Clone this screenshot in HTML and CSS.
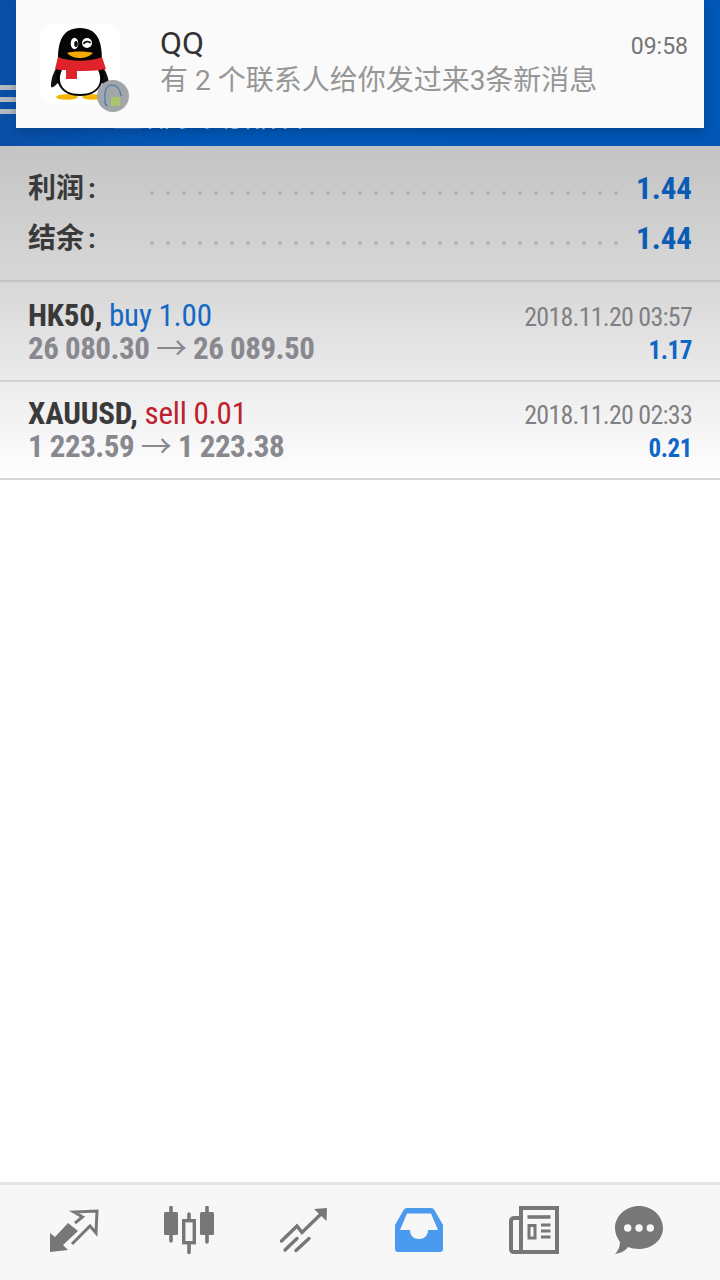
FILE: index.html
```html
<!DOCTYPE html>
<html lang="zh">
<head>
  <meta charset="UTF-8" />
  <meta name="viewport" content="width=device-width, initial-scale=1.0"/>
  <title>History</title>
  <link rel="stylesheet" href="styles.css">
</head>
<body>
  <header class="topbar">
    <div class="menu"><span></span><span></span><span></span></div>
    <div class="title">全部交易品种</div>
  </header>

  <div class="notice">
    <div class="notice-icon">
      <svg class="penguin" viewBox="0 0 80 80" width="80" height="80">
        <rect width="80" height="80" rx="14" fill="#fff"/>
        <ellipse cx="27" cy="73" rx="11" ry="2.800" fill="#f4b400"/>
        <ellipse cx="53" cy="73" rx="11" ry="2.800" fill="#f4b400"/>
        <path d="M18 42 C13 48 11 56 11 62 C11 65 14 63 18 59 Z M62 42 C67 48 69 56 69 62 C69 65 66 63 62 59 Z" fill="#111"/>
        <path d="M18 36 C18 18 22 4 40 4 C58 4 62 18 62 36 C66 50 65 72 40 72 C15 72 14 50 18 36 Z" fill="#050505"/>
        <path d="M22 46 C17 56 20 70 40 70 C60 70 63 56 58 46 Z" fill="#fff"/>
        <path d="M18 33 C30 38 50 38 62 33 L66 45 C56 47 46 47 37 47 L37 55 L26 55 L26 46 C22 46 18 46 15 45 Z" fill="#e0222b"/>
        <ellipse cx="34.500" cy="19.500" rx="3.800" ry="5.700" fill="#fff"/>
        <ellipse cx="47" cy="19" rx="5" ry="5" fill="#fff"/>
        <ellipse cx="36" cy="20" rx="1.800" ry="3" fill="#111"/>
        <path d="M43.500 20 C45 17 49 17 50.500 19" fill="none" stroke="#111" stroke-width="1.800"/>
        <path d="M27 29 C32 27 47 27 53 29 C49 33 44 34 40 34 C35 34 31 33 27 29 Z" fill="#f4a800"/>
      </svg>
      <svg class="badge" viewBox="0 0 32 32" width="32" height="32">
        <circle cx="16" cy="16" r="16" fill="#a3a6a8"/>
        <path d="M10 26 C7 24 8 21 8 19 C7 12 9 5 15 5 C20 5 23 8 24 16" fill="none" stroke="#3f78b8" stroke-width="1.200"/>
        <rect x="14" y="17" width="9" height="9" fill="#a9c46c"/>
      </svg>
    </div>
    <div class="notice-text">
      <div class="notice-head">
        <span class="notice-app">QQ</span>
        <span class="notice-time">09:58</span>
      </div>
      <div class="notice-msg">有 2 个联系人给你发过来3条新消息</div>
    </div>
  </div>

  <main class="panel">
    <section class="summary">
      <div class="sum-row">
        <span class="sum-label">利润<i>:</i></span>
        <span class="dots"></span>
        <span class="sum-value">1.44</span>
      </div>
      <div class="sum-row">
        <span class="sum-label">结余<i>:</i></span>
        <span class="dots"></span>
        <span class="sum-value">1.44</span>
      </div>
    </section>

    <section class="deal">
      <div class="deal-left">
        <div class="deal-name"><b>HK50,</b> <span class="buy">buy 1.00</span></div>
        <div class="deal-price">26 080.30 <span class="arrow">→</span> 26 089.50</div>
      </div>
      <div class="deal-right">
        <div class="deal-date">2018.11.20 03:57</div>
        <div class="deal-profit">1.17</div>
      </div>
    </section>

    <section class="deal">
      <div class="deal-left">
        <div class="deal-name"><b>XAUUSD,</b> <span class="sell">sell 0.01</span></div>
        <div class="deal-price">1 223.59 <span class="arrow">→</span> 1 223.38</div>
      </div>
      <div class="deal-right">
        <div class="deal-date">2018.11.20 02:33</div>
        <div class="deal-profit">0.21</div>
      </div>
    </section>
  </main>

  <nav class="tabs">
    <svg class="tab" viewBox="0 0 50 50" width="50" height="50">
      <path d="M1 46 L1 27 L6 31 L19 17 L29 25 L14 39 L19 44 Z" fill="#777"/>
      <path d="M26 17 L33.500 11 L25 6 L48 5 L47 27 L41 20 L23 38" fill="none" stroke="#777" stroke-width="3"/>
    </svg>
    <svg class="tab" viewBox="0 0 50 50" width="50" height="50">
      <path d="M7 1.500 V35 M43 1.500 V36 M25 8 V46.500" fill="none" stroke="#777" stroke-width="3.600" stroke-linecap="round"/>
      <rect x="0" y="6" width="14" height="23" rx="1.500" fill="#777"/>
      <rect x="36" y="6" width="14" height="23" rx="1.500" fill="#777"/>
      <rect x="19.700" y="14.700" width="10.600" height="22" fill="#f7f7f7" stroke="#777" stroke-width="3.400"/>
    </svg>
    <svg class="tab" viewBox="0 0 50 50" width="50" height="50">
      <path d="M2.500 35 L18 20 L23 26.500 L44 6" fill="none" stroke="#777" stroke-width="3.400" stroke-linecap="round"/>
      <path d="M35 3 L48 2 L47.500 15 Z" fill="#777"/>
      <path d="M6 44 L18 32.500 M17 44.500 L30 32.500" fill="none" stroke="#777" stroke-width="3.400" stroke-linecap="round"/>
    </svg>
    <svg class="tab" viewBox="0 0 50 50" width="50" height="50">
      <path d="M13 2 H37 C39 2 40 3 41 5 L49 19 V43 C49 45 48 46 46 46 H4 C2 46 1 45 1 43 V19 L9 5 C10 3 11 2 13 2 Z" fill="#4a9bf0"/>
      <path d="M13 7.500 H37 L44 24 H34 C34 30 30 33 25 33 C20 33 16 30 16 24 H6 Z" fill="#f7f7f7"/>
    </svg>
    <svg class="tab" viewBox="0 0 50 50" width="50" height="50">
      <path d="M10 12 H6 C3 12 2 13 2 15 V43 C2 45 3 46 5 46 H48 V2 H12 V44" fill="none" stroke="#777" stroke-width="4"/>
      <path d="M18.500 11 H41.500" stroke="#777" stroke-width="3.600"/>
      <rect x="20" y="19.500" width="6" height="12.500" fill="none" stroke="#777" stroke-width="3"/>
      <path d="M32 19 H41.500 M32 25 H41.500 M32 31 H41.500" stroke="#777" stroke-width="3"/>
    </svg>
    <svg class="tab" viewBox="0 0 50 50" width="50" height="50">
      <path d="M25 0 C38 0 49 10 49 22 C49 34 38 43 25 43 C21 43 17 42 14 41 C11 45 7 47 1 48 C4 45 6 41 6 36 C3 32 1 27 1 22 C1 10 12 0 25 0 Z" fill="#777"/>
      <circle cx="13.700" cy="22" r="3.700" fill="#f7f7f7"/>
      <circle cx="25" cy="22" r="3.700" fill="#f7f7f7"/>
      <circle cx="36.300" cy="22" r="3.700" fill="#f7f7f7"/>
    </svg>
  </nav>
</body>
</html>
```

FILE: styles.css
```css
* {
  box-sizing: border-box;
  margin: 0;
  padding: 0;
}

body {
  width: 720px;
  height: 1280px;
  overflow: hidden;
  position: relative;
  display: flex;
  flex-direction: column;
  background: #fff;
  font-family: "Roboto Condensed", "Liberation Sans Narrow", Roboto, "Noto Sans CJK SC", sans-serif;
}

.topbar {
  height: 146px;
  flex: none;
  display: flex;
  align-items: flex-end;
  gap: 80px;
  padding-bottom: 17px;
  background: linear-gradient(to right, #0a4fa8, #0059b8 30%, #0057b5);
}

.menu {
  width: 32px;
  margin-bottom: 15px;
  display: flex;
  flex-direction: column;
  gap: 7px;
}

.menu span {
  height: 5px;
  background: #b4b8c0;
}

.title {
  color: #b8cde6;
  font-family: "Noto Sans CJK SC", sans-serif;
  font-size: 33px;
  line-height: 34px;
}

.notice {
  position: absolute;
  left: 16px;
  top: 0;
  width: 688px;
  height: 128px;
  display: flex;
  padding: 24px 16px 0 24px;
  gap: 40px;
  background: #fafafa;
  box-shadow: 0 4px 10px rgba(0, 40, 90, 0.35);
}

.notice-icon {
  position: relative;
  width: 80px;
  height: 80px;
  flex: none;
}

.penguin {
  display: block;
}

.badge {
  position: absolute;
  left: 57px;
  top: 56px;
}

.notice-text {
  flex: 1;
}

.notice-head {
  display: flex;
  justify-content: space-between;
  align-items: baseline;
}

.notice-app {
  font-family: Roboto, sans-serif;
  font-size: 32px;
  line-height: 38px;
  color: #333;
}

.notice-time {
  font-family: Roboto, sans-serif;
  font-size: 23px;
  color: #757575;
}

.notice-msg {
  margin-top: 1px;
  font-family: Roboto, "Noto Sans CJK SC", sans-serif;
  font-size: 28px;
  line-height: 36px;
  color: #969696;
}

.panel {
  height: 334px;
  flex: none;
  background: linear-gradient(to bottom, #c4c4c4, #dadada 45%, #fff);
}

.summary {
  height: 136px;
  padding: 17px 28px 0;
  border-bottom: 2px solid #c4c4c6;
}

.sum-row {
  height: 50px;
  display: flex;
  align-items: center;
}

.sum-label {
  width: 122px;
  padding-bottom: 4px;
  font-family: Roboto, "Noto Sans CJK SC", sans-serif;
  font-weight: 700;
  font-size: 28px;
  color: #3a3a3a;
}

.sum-label i {
  margin-left: 4px;
  font-style: normal;
}

.dots {
  flex: 1;
  height: 4px;
  margin: 9px 14px 0 0;
  background-image: radial-gradient(circle, #b2b2b4 1.5px, transparent 2.2px);
  background-size: 16px 4px;
  background-position: -6px 0;
}

.sum-value {
  font-weight: 700;
  font-size: 31px;
  color: #0b5cb5;
}

.deal {
  height: 98px;
  padding: 15px 28px 0;
  display: flex;
  justify-content: space-between;
  border-bottom: 2px solid #d8d8da;
}

.summary + .deal {
  height: 100px;
  padding-top: 17px;
  border-bottom-color: #d2d2d4;
}

.deal-name {
  font-size: 31px;
  line-height: 33px;
  letter-spacing: -0.2px;
}

.deal-name b {
  color: #3a3a3a;
}

.deal-name .buy {
  color: #1469c4;
}

.deal-name .sell {
  color: #c0202c;
}

.deal-price {
  font-size: 31px;
  line-height: 34px;
  letter-spacing: -0.5px;
  font-weight: 700;
  color: #88888e;
}

.arrow {
  font-weight: 400;
}

.deal-right {
  text-align: right;
}

.deal-date {
  margin-top: 3px;
  font-size: 26px;
  line-height: 30px;
  letter-spacing: -0.75px;
  color: #808084;
}

.deal-profit {
  margin-top: 4px;
  font-size: 25px;
  line-height: 30px;
  letter-spacing: -0.4px;
  font-weight: 700;
  color: #0f66c6;
}

.tabs {
  margin-top: auto;
  height: 98px;
  display: flex;
  gap: 65px;
  padding: 21px 0 0 49px;
  background: #f7f7f7;
  border-top: 3px solid #e6e6e6;
}

.tab {
  display: block;
}

.tab:last-child {
  margin-left: -10px;
}
```
